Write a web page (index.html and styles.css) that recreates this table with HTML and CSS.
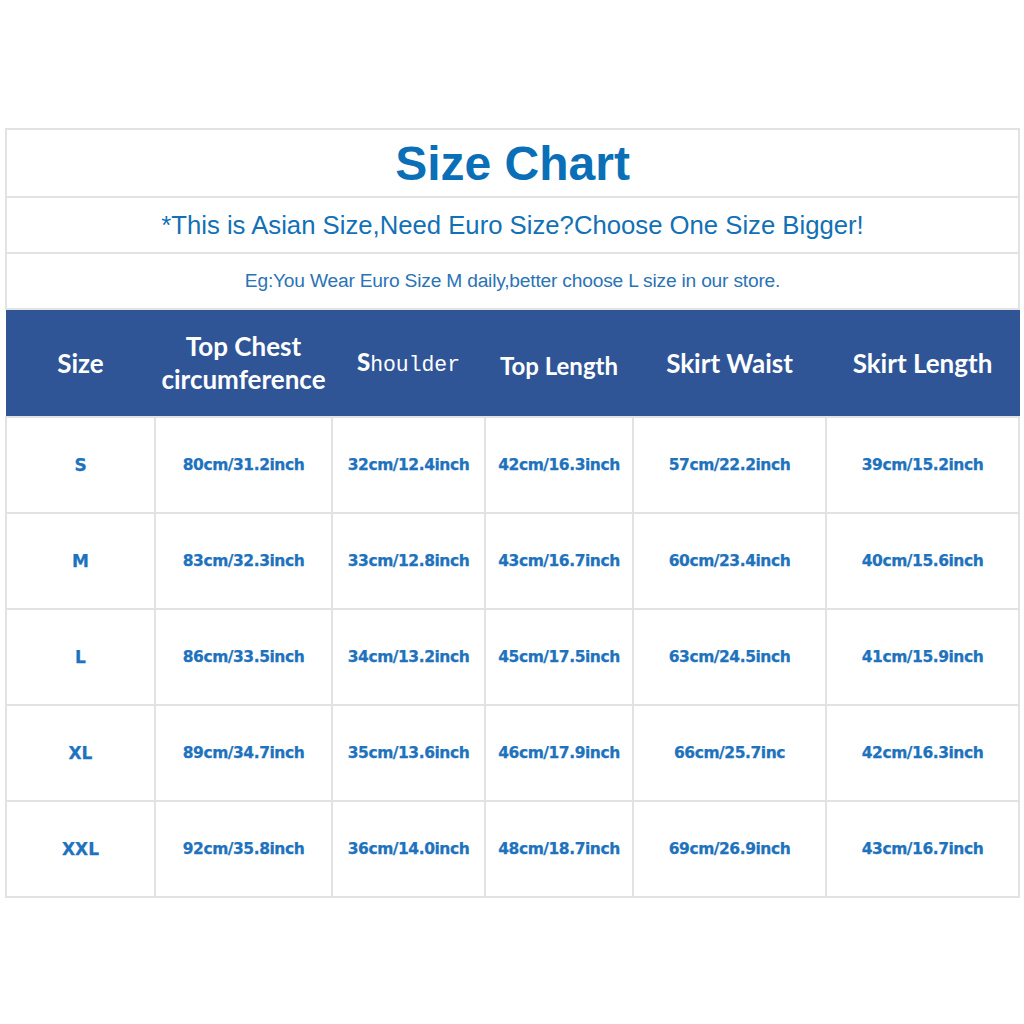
FILE: index.html
```html
<!DOCTYPE html>
<html>
<head>
<meta charset="utf-8">
<link rel="stylesheet" href="styles.css">
</head>
<body>
<div class="page">
  <table class="chart">
    <colgroup>
      <col class="c1"><col class="c2"><col class="c3"><col class="c4"><col class="c5"><col class="c6">
    </colgroup>
    <tr class="r-title"><td colspan="6" class="title">Size Chart</td></tr>
    <tr class="r-sub"><td colspan="6" class="sub">*This is Asian Size,Need Euro Size?Choose One Size Bigger!</td></tr>
    <tr class="r-eg"><td colspan="6" class="eg">Eg:You Wear Euro Size M daily,better choose L size in our store.</td></tr>
    <tr class="r-head">
      <th>Size</th>
      <th class="two">Top Chest<br>circumference</th>
      <th><span class="sh-s">S</span><span class="sh-m">houlder</span></th>
      <th><span class="low">Top Length</span></th>
      <th>Skirt Waist</th>
      <th>Skirt Length</th>
    </tr>
    <tr class="r-data"><td class="sz">S</td><td>80cm/31.2inch</td><td>32cm/12.4inch</td><td>42cm/16.3inch</td><td>57cm/22.2inch</td><td>39cm/15.2inch</td></tr>
    <tr class="r-data"><td class="sz">M</td><td>83cm/32.3inch</td><td>33cm/12.8inch</td><td>43cm/16.7inch</td><td>60cm/23.4inch</td><td>40cm/15.6inch</td></tr>
    <tr class="r-data"><td class="sz">L</td><td>86cm/33.5inch</td><td>34cm/13.2inch</td><td>45cm/17.5inch</td><td>63cm/24.5inch</td><td>41cm/15.9inch</td></tr>
    <tr class="r-data"><td class="sz">XL</td><td>89cm/34.7inch</td><td>35cm/13.6inch</td><td>46cm/17.9inch</td><td>66cm/25.7inc</td><td>42cm/16.3inch</td></tr>
    <tr class="r-data"><td class="sz">XXL</td><td>92cm/35.8inch</td><td>36cm/14.0inch</td><td>48cm/18.7inch</td><td>69cm/26.9inch</td><td>43cm/16.7inch</td></tr>
  </table>
</div>
</body>
</html>
```
FILE: styles.css
```css
html, body {
  margin: 0;
  padding: 0;
  background: #ffffff;
}
.page {
  padding-top: 128px;
  padding-left: 5px;
}
.chart {
  border-collapse: collapse;
  table-layout: fixed;
  width: 1013px;
}
.c1 { width: 149px; }
.c2 { width: 177px; }
.c3 { width: 153px; }
.c4 { width: 148px; }
.c5 { width: 193px; }
.c6 { width: 193px; }

.chart td {
  border: 2px solid #e2e2e2;
  text-align: center;
  vertical-align: middle;
  padding: 0;
}
.r-title td { height: 66px; }
.r-sub td { height: 54px; }
.r-eg td { height: 54px; }

.title {
  font-family: "Liberation Sans", Arial, sans-serif;
  font-weight: bold;
  font-size: 48px;
  color: #0b6fb8;
  padding-top: 2px;
}
.sub {
  font-family: "Liberation Sans", Arial, sans-serif;
  font-size: 25.7px;
  color: #1270b6;
}
.eg {
  font-family: "Liberation Sans", Arial, sans-serif;
  font-size: 19.2px;
  letter-spacing: -0.2px;
  color: #2a73b5;
  padding-top: 2px;
}

.r-head th {
  background: #2f5597;
  color: #ffffff;
  height: 106px;
  padding: 0;
  border: 1px solid #2f5597;
  font-family: Lato, "Open Sans", sans-serif;
  font-weight: bold;
  font-size: 26px;
  line-height: 33px;
  vertical-align: middle;
}
.low {
  display: inline-block;
  padding-top: 5px;
  font-size: 24px;
}
.sh-s {
  font-family: Lato, sans-serif;
  font-weight: 900;
  font-size: 24px;
}
.sh-m {
  font-family: "Liberation Mono", "DejaVu Sans Mono", monospace;
  font-weight: normal;
  font-size: 21.4px;
}

.r-data td {
  height: 94px;
  font-family: "DejaVu Sans", Verdana, sans-serif;
  font-weight: bold;
  font-size: 15.5px;
  letter-spacing: -0.45px;
  color: #2072bd;
  -webkit-text-stroke: 0.25px #2072bd;
}
.r-data td.sz {
  font-size: 17px;
  letter-spacing: 0;
}
```
